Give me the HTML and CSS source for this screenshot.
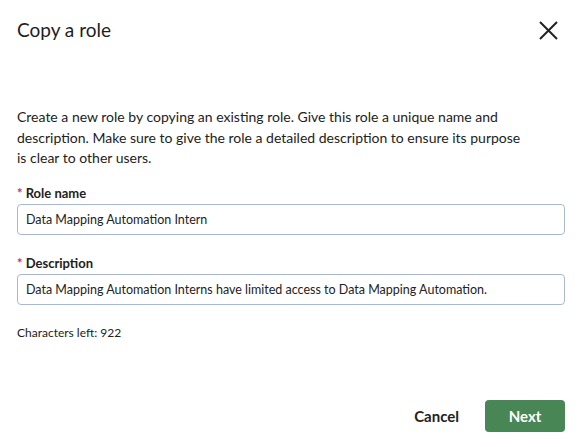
FILE: index.html
```html
<!DOCTYPE html>
<html>
<head>
  <link rel="stylesheet" href="styles.css">
</head>
<body>
  <div class="dialog">
    <div class="dialog-header">
      <h2 class="title">Copy a role</h2>
      <button class="close" aria-label="Close">
        <svg width="24" height="24" viewBox="0 0 24 24">
          <path d="M4 4 L21 21 M21 4 L4 21" stroke="#222" stroke-width="2" fill="none"/>
        </svg>
      </button>
    </div>

    <p class="intro">Create a new role by copying an existing role. Give this role a unique name and description. Make sure to give the role a detailed description to ensure its purpose is clear to other users.</p>

    <div class="field">
      <label for="role-name"><span class="req">*</span> Role name</label>
      <input type="text" id="role-name" value="Data Mapping Automation Intern">
    </div>

    <div class="field">
      <label for="role-desc"><span class="req">*</span> Description</label>
      <input type="text" id="role-desc" value="Data Mapping Automation Interns have limited access to Data Mapping Automation.">
    </div>

    <div class="chars-left">Characters left: 922</div>

    <div class="dialog-footer">
      <button class="btn-cancel">Cancel</button>
      <button class="btn-next">Next</button>
    </div>
  </div>
</body>
</html>
```

FILE: styles.css
```css
body {
  margin: 0;
  background: #fff;
  font-family: Lato, 'Open Sans', sans-serif;
  color: #222;
}

.dialog {
  height: 447px;
  box-sizing: border-box;
  padding: 16px 18px 15px 17px;
  display: flex;
  flex-direction: column;
}

.dialog-header {
  display: flex;
  justify-content: space-between;
  align-items: center;
  height: 28px;
}

.title {
  margin: 0;
  font-size: 19px;
  font-weight: 400;
  line-height: 28px;
  color: #1e1e1e;
}

.close {
  border: none;
  background: none;
  padding: 0;
  margin-right: 5px;
  width: 24px;
  height: 24px;
  cursor: pointer;
}

.close svg {
  display: block;
}

.intro {
  margin: 63px 0 0;
  max-width: 508px;
  font-size: 14px;
  line-height: 20.5px;
}

.field {
  margin-top: 15px;
  display: flex;
  flex-direction: column;
  gap: 2px;
}

.field + .field {
  margin-top: 19px;
}

label {
  font-size: 13px;
  font-weight: 700;
  line-height: 18px;
}

.req {
  color: #e0245e;
}

input {
  height: 31px;
  box-sizing: border-box;
  border: 1px solid #a9b9ca;
  border-radius: 4px;
  padding: 0 8px;
  font-family: Lato, 'Open Sans', sans-serif;
  font-size: 12.5px;
  color: #222;
}

.chars-left {
  margin-top: 20px;
  font-size: 12px;
  line-height: 16px;
}

.dialog-footer {
  margin-top: auto;
  display: flex;
  justify-content: flex-end;
  gap: 10px;
}

.dialog-footer button {
  height: 32px;
  border: none;
  border-radius: 4px;
  font-family: Lato, 'Open Sans', sans-serif;
  font-size: 15px;
  cursor: pointer;
}

.btn-cancel {
  background: none;
  color: #222;
  font-weight: 700;
  padding: 0 16px;
}

.btn-next {
  width: 80px;
  background: #488656;
  color: #fff;
  font-weight: 700;
}
```
